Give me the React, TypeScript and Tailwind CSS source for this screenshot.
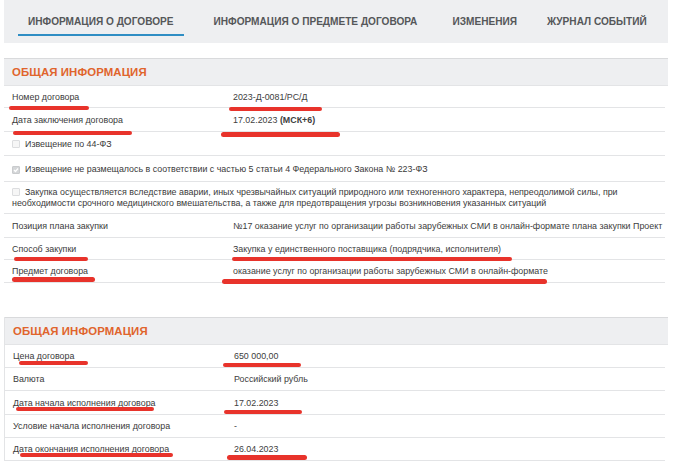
import React from "react";

const F = { fontFamily: '"Liberation Sans", Arial, sans-serif' };

function Row({ label, value, h = "h-[24px]" }: { label: React.ReactNode; value?: React.ReactNode; h?: string }) {
  return (
    <div className={`flex items-center border-b border-[#e3e4e6] ${h} pt-[2px] text-[8.9px] text-[#3a3a3a]`}>
      <div className="w-[229px] pl-[8px] shrink-0">{label}</div>
      <div className="flex-1 whitespace-nowrap text-[#404040]">{value}</div>
    </div>
  );
}

function Check({ checked }: { checked?: boolean }) {
  return (
    <span
      className={`inline-flex w-[8px] h-[8px] mr-[5px] border rounded-[1px] items-center justify-center align-[-1px] ${
        checked ? "bg-[#d4d6d8] border-[#c9cbcd]" : "bg-[#f6f6f6] border-[#dcdddf]"
      }`}
    >
      {checked && (
        <svg width="6" height="6" viewBox="0 0 6 6">
          <path d="M1 3 L2.5 4.5 L5 1.5" stroke="#fff" strokeWidth="1.2" fill="none" />
        </svg>
      )}
    </span>
  );
}

function CheckRow({ children, h = "h-[24px]" }: { children: React.ReactNode; h?: string }) {
  return (
    <div className={`flex items-center border-b border-[#e3e4e6] ${h} pt-[1px] pl-[8px] pr-[40px] text-[8.9px] text-[#3a3a3a] leading-[11px]`}>
      <div>{children}</div>
    </div>
  );
}

function Header() {
  return (
    <div className="border-t border-[#d9dadc] bg-[#eeeff1] h-[28px] flex items-center pt-[1px] pl-[8px] mr-[-3px] border-b border-b-[#e3e4e6]">
      <span className="text-[11.4px] font-bold text-[#e0642c] tracking-[0.1px]">ОБЩАЯ ИНФОРМАЦИЯ</span>
    </div>
  );
}

const marks: [number, number, number, number][] = [
  [9, 106, 80, 4],
  [229, 107, 93, 4],
  [13, 131, 119, 4],
  [221, 132, 119, 5],
  [14, 257, 74, 4],
  [232, 257, 280, 4],
  [12, 277, 83, 5],
  [222, 279, 325, 5],
  [19, 361, 69, 4],
  [223, 363, 78, 4],
  [16, 407, 138, 4],
  [224, 410, 78, 4],
  [20, 453, 153, 4],
  [227, 455, 80, 5],
];

export default function App() {
  return (
    <div style={F} className="relative w-[680px] h-[473px] bg-white overflow-hidden">
      {/* Tabs */}
      <div className="mx-[4px] mr-[12px] h-[43px] bg-[#eeeff1] flex items-start text-[10.1px] font-bold text-[#555759] whitespace-nowrap">
        <div className="ml-[14px] px-[10px] pt-[14px] h-[36px] border-b-[2px] border-[#2f8ec4]">ИНФОРМАЦИЯ О ДОГОВОРЕ</div>
        <div className="ml-[30px] pt-[14px]">ИНФОРМАЦИЯ О ПРЕДМЕТЕ ДОГОВОРА</div>
        <div className="ml-[35px] pt-[14px]">ИЗМЕНЕНИЯ</div>
        <div className="ml-[30px] pt-[14px]">ЖУРНАЛ СОБЫТИЙ</div>
      </div>

      {/* Section 1 */}
      <div className="mt-[15px] ml-[4px] mr-[15px]">
        <Header />
        <Row label="Номер договора" value="2023-Д-0081/РС/Д" h="h-[22px]" />
        <Row label="Дата заключения договора" value={<>17.02.2023 <b>(МСК+6)</b></>} />
        <CheckRow><Check />Извещение по 44-ФЗ</CheckRow>
        <CheckRow h="h-[26px]"><Check checked />Извещение не размещалось в соответствии с частью 5 статьи 4 Федерального Закона № 223-ФЗ</CheckRow>
        <CheckRow h="h-[32px]">
          <Check />Закупка осуществляется вследствие аварии, иных чрезвычайных ситуаций природного или техногенного характера, непреодолимой силы, при необходимости срочного медицинского вмешательства, а также для предотвращения угрозы возникновения указанных ситуаций
        </CheckRow>
        <Row label="Позиция плана закупки" value="№17 оказание услуг по организации работы зарубежных СМИ в онлайн-формате плана закупки Проект" />
        <Row label="Способ закупки" value="Закупка у единственного поставщика (подрядчика, исполнителя)" h="h-[22px]" />
        <Row label="Предмет договора" value="оказание услуг по организации работы зарубежных СМИ в онлайн-формате" h="h-[23px]" />
      </div>

      {/* Section 2 */}
      <div className="mt-[34px] ml-[4px] mr-[15px] border-l border-[#e3e4e6]">
        <Header />
        <Row label="Цена договора" value="650 000,00" h="h-[23px]" />
        <Row label="Валюта" value="Российский рубль" h="h-[23px]" />
        <Row label="Дата начала исполнения договора" value="17.02.2023" />
        <Row label="Условие начала исполнения договора" value="-" h="h-[23px]" />
        <Row label="Дата окончания исполнения договора" value="26.04.2023" h="h-[23px]" />
      </div>

      {/* annotation strokes */}
      {marks.map(([x, y, w, h], i) => (
        <span
          key={i}
          className="absolute rounded-full bg-[#e8332b]"
          style={{ left: x, top: y, width: w, height: h }}
        />
      ))}
    </div>
  );
}
